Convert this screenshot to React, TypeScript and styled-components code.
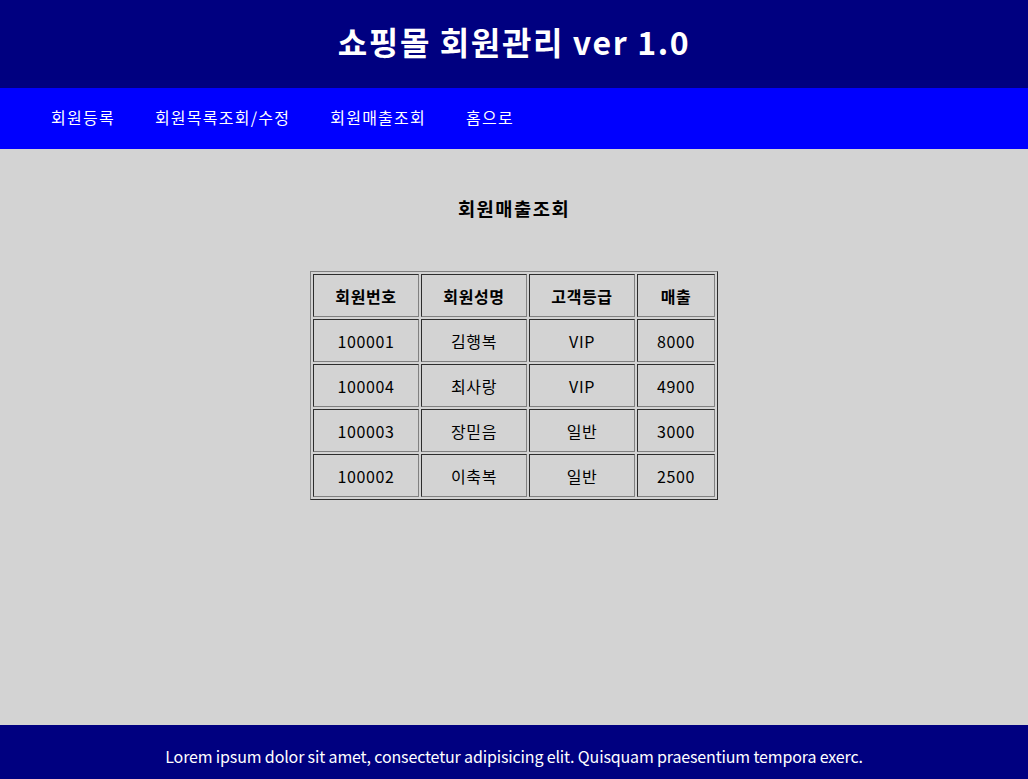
import React from "react";
import styled, { createGlobalStyle } from "styled-components";

const GlobalStyle = createGlobalStyle`
  html, body { margin: 0; padding: 0; }
  body {
    font-family: "Noto Sans CJK KR", "Noto Sans", sans-serif;
    font-size: 16px;
    color: #000;
  }
`;

const Page = styled.div`
  display: flex;
  flex-direction: column;
  min-height: 100vh;
`;

const Header = styled.header`
  height: 88px;
  background: #000080;
  display: flex;
  align-items: center;
  justify-content: center;
`;

const Title = styled.h1`
  margin: 0 0 6px;
  color: #fff;
  font-size: 32px;
  font-weight: 700;
  line-height: 40px;
  letter-spacing: 1.6px;
`;

const Nav = styled.nav`
  height: 61px;
  background: #0000ff;
  display: flex;
  align-items: center;
  padding-left: 51px;
  gap: 40px;
`;

const NavLink = styled.a`
  color: #fff;
  text-decoration: none;
  font-size: 16px;
  line-height: 22px;
  letter-spacing: 1.25px;
  margin-bottom: 3px;
`;

const Main = styled.section`
  flex: 1;
  background: #d3d3d3;
  display: flex;
  flex-direction: column;
  align-items: center;
`;

const SectionTitle = styled.h3`
  margin: 46px 0 50px;
  font-size: 18.72px;
  font-weight: 700;
  line-height: 26px;
  letter-spacing: 1.5px;
`;

const Table = styled.table`
  border: 1px outset grey;
  border-spacing: 2px;
  border-collapse: separate;
`;

const Cell = styled.td<{ $w: number; $head?: boolean }>`
  border: 1px inset grey;
  box-sizing: border-box;
  width: ${(p) => p.$w}px;
  height: 43px;
  padding: 0;
  text-align: center;
  vertical-align: middle;
  font-size: 16px;
  font-weight: ${(p) => (p.$head ? 700 : 400)};
  letter-spacing: 0.6px;
`;

const Footer = styled.footer`
  box-sizing: border-box;
  height: 54px;
  padding-top: 8px;
  background: #000080;
  color: #fff;
  display: flex;
  align-items: center;
  justify-content: center;
  font-size: 16px;
  letter-spacing: -0.15px;
`;

const widths = [106, 106, 106, 78];
const heads = ["회원번호", "회원성명", "고객등급", "매출"];
const rows = [
  ["100001", "김행복", "VIP", "8000"],
  ["100004", "최사랑", "VIP", "4900"],
  ["100003", "장믿음", "일반", "3000"],
  ["100002", "이축복", "일반", "2500"],
];

export default function App() {
  return (
    <Page>
      <GlobalStyle />
      <Header>
        <Title>쇼핑몰 회원관리 ver 1.0</Title>
      </Header>
      <Nav>
        <NavLink href="#">회원등록</NavLink>
        <NavLink href="#">회원목록조회/수정</NavLink>
        <NavLink href="#">회원매출조회</NavLink>
        <NavLink href="#">홈으로</NavLink>
      </Nav>
      <Main>
        <SectionTitle>회원매출조회</SectionTitle>
        <Table>
          <tbody>
            <tr>
              {heads.map((h, i) => (
                <Cell as="th" key={h} $w={widths[i]} $head>
                  {h}
                </Cell>
              ))}
            </tr>
            {rows.map((r) => (
              <tr key={r[0]}>
                {r.map((c, i) => (
                  <Cell key={i} $w={widths[i]}>
                    {c}
                  </Cell>
                ))}
              </tr>
            ))}
          </tbody>
        </Table>
      </Main>
      <Footer>
        Lorem ipsum dolor sit amet, consectetur adipisicing elit. Quisquam praesentium tempora exerc.
      </Footer>
    </Page>
  );
}
